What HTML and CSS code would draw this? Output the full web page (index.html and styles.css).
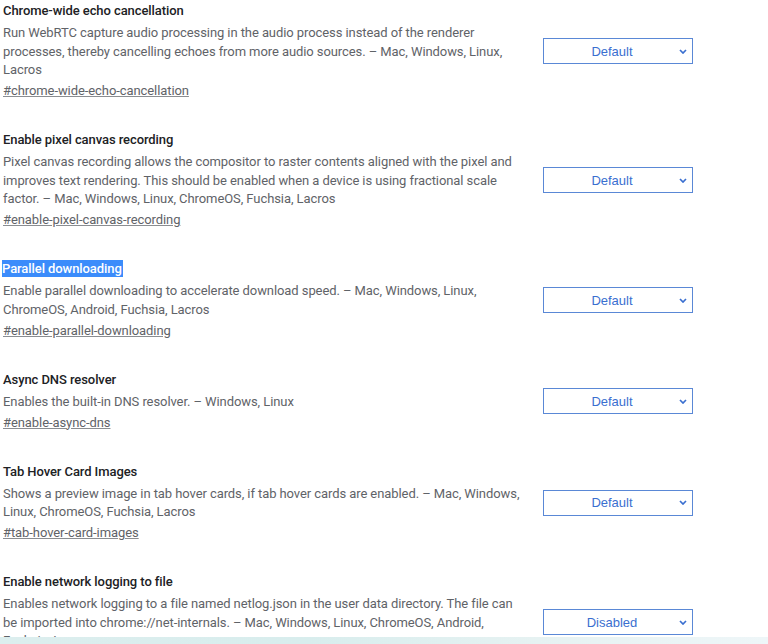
FILE: index.html
```html
<!DOCTYPE html>
<html lang="en">
<head>
<meta charset="utf-8">
<title>Flags</title>
<link rel="stylesheet" href="styles.css">
</head>
<body>
<div class="list">
  <div class="row">
    <div class="info">
      <div class="name">Chrome-wide echo cancellation</div>
      <p class="desc">Run WebRTC capture audio processing in the audio process instead of the renderer processes, thereby cancelling echoes from more audio sources. – Mac, Windows, Linux, Lacros</p>
      <a class="perma" href="#">#chrome-wide-echo-cancellation</a>
    </div>
    <div class="select"><span class="val">Default</span><svg class="chev" viewBox="0 0 8 5" width="8" height="5"><path d="M1 1 L4 4 L7 1" fill="none" stroke="#3a6fd0" stroke-width="1.7"/></svg></div>
  </div>
  <div class="row">
    <div class="info">
      <div class="name">Enable pixel canvas recording</div>
      <p class="desc">Pixel canvas recording allows the compositor to raster contents aligned with the pixel and improves text rendering. This should be enabled when a device is using fractional scale factor. – Mac, Windows, Linux, ChromeOS, Fuchsia, Lacros</p>
      <a class="perma" href="#">#enable-pixel-canvas-recording</a>
    </div>
    <div class="select"><span class="val">Default</span><svg class="chev" viewBox="0 0 8 5" width="8" height="5"><path d="M1 1 L4 4 L7 1" fill="none" stroke="#3a6fd0" stroke-width="1.7"/></svg></div>
  </div>
  <div class="row">
    <div class="info">
      <div class="name"><span class="hl">Parallel downloading</span></div>
      <p class="desc">Enable parallel downloading to accelerate download speed. – Mac, Windows, Linux, ChromeOS, Android, Fuchsia, Lacros</p>
      <a class="perma" href="#">#enable-parallel-downloading</a>
    </div>
    <div class="select"><span class="val">Default</span><svg class="chev" viewBox="0 0 8 5" width="8" height="5"><path d="M1 1 L4 4 L7 1" fill="none" stroke="#3a6fd0" stroke-width="1.7"/></svg></div>
  </div>
  <div class="row">
    <div class="info">
      <div class="name">Async DNS resolver</div>
      <p class="desc">Enables the built-in DNS resolver. – Windows, Linux</p>
      <a class="perma" href="#">#enable-async-dns</a>
    </div>
    <div class="select"><span class="val">Default</span><svg class="chev" viewBox="0 0 8 5" width="8" height="5"><path d="M1 1 L4 4 L7 1" fill="none" stroke="#3a6fd0" stroke-width="1.7"/></svg></div>
  </div>
  <div class="row">
    <div class="info">
      <div class="name">Tab Hover Card Images</div>
      <p class="desc">Shows a preview image in tab hover cards, if tab hover cards are enabled. – Mac, Windows, Linux, ChromeOS, Fuchsia, Lacros</p>
      <a class="perma" href="#">#tab-hover-card-images</a>
    </div>
    <div class="select"><span class="val">Default</span><svg class="chev" viewBox="0 0 8 5" width="8" height="5"><path d="M1 1 L4 4 L7 1" fill="none" stroke="#3a6fd0" stroke-width="1.7"/></svg></div>
  </div>
  <div class="row">
    <div class="info">
      <div class="name">Enable network logging to file</div>
      <p class="desc">Enables network logging to a file named netlog.json in the user data directory. The file can be imported into chrome://net-internals. – Mac, Windows, Linux, ChromeOS, Android, Fuchsia, Lacros</p>
      <a class="perma" href="#">#enable-network-logging-to-file</a>
    </div>
    <div class="select"><span class="val">Disabled</span><svg class="chev" viewBox="0 0 8 5" width="8" height="5"><path d="M1 1 L4 4 L7 1" fill="none" stroke="#3a6fd0" stroke-width="1.7"/></svg></div>
  </div>
</div>
<div class="taskbar"></div>
</body>
</html>
```
FILE: styles.css
```css
html, body {
  margin: 0;
  padding: 0;
  background: #ffffff;
  overflow: hidden;
}
body {
  font-family: Roboto, "Liberation Sans", sans-serif;
  font-size: 13px;
}
.list {
  padding: 2px 0 0 3px;
  display: flex;
  flex-direction: column;
  gap: 30.5px;
}
.row {
  display: flex;
  align-items: center;
}
.info {
  width: 520px;
  flex: none;
  letter-spacing: -0.08px;
}
.name {
  font-weight: 500;
  color: #202124;
  line-height: 18px;
}
.hl {
  background: #3b8cfb;
  color: #ffffff;
  padding: 1px 1px 1px 0;
  margin-left: -1px;
}
.desc {
  margin: 4px 0 0;
  color: #5f6368;
  line-height: 18.5px;
  width: 518px;
}
.perma {
  display: block;
  margin-top: 2.5px;
  color: #5f6368;
  line-height: 18.5px;
  text-decoration: underline;
  text-decoration-color: #8a8d91;
}
.select {
  margin-left: 20px;
  width: 148px;
  height: 24px;
  border: 1px solid #5a88d6;
  display: flex;
  align-items: center;
  font-family: "Liberation Sans", Arial, sans-serif;
  font-size: 13px;
  color: #3a6fd0;
}
.val {
  flex: 1;
  text-align: center;
  padding-left: 1px;
}
.chev {
  margin-right: 5px;
  flex: none;
}
.taskbar {
  position: fixed;
  left: 0;
  right: 0;
  bottom: 0;
  height: 7px;
  background: linear-gradient(90deg, #dceeee 0%, #d8eded 40%, #e6f2f2 70%, #eef6f8 100%);
}
```
